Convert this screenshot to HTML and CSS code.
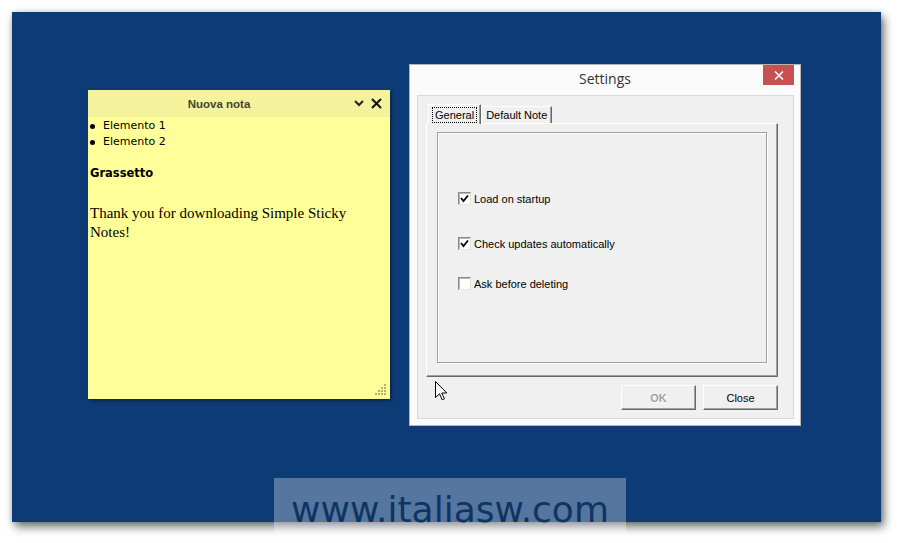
FILE: index.html
```html
<!DOCTYPE html>
<html lang="en">
  <head>
    <meta charset="UTF-8" />
    <meta name="viewport" content="width=device-width, initial-scale=1.0" />
    <title>Simple Sticky Notes</title>
    <link rel="stylesheet" href="styles.css">
  </head>
  <body>
    <div class="desktop">
      <!-- Sticky note window -->
      <div class="note">
        <div class="note-head">
          <span class="note-title">Nuova nota</span>
          <span class="note-tools">
            <svg width="10" height="7" viewBox="0 0 10 7"><polyline points="1,1 5,5 9,1" fill="none" stroke="#222" stroke-width="2"/></svg>
            <svg width="11" height="11" viewBox="0 0 11 11"><path d="M1,1 L10,10 M10,1 L1,10" stroke="#111" stroke-width="2"/></svg>
          </span>
        </div>
        <div class="note-body">
          <ul class="note-list">
            <li>Elemento 1</li>
            <li>Elemento 2</li>
          </ul>
          <p class="note-bold">Grassetto</p>
          <p class="note-text">Thank you for downloading Simple Sticky Notes!</p>
        </div>
        <svg class="grip" width="12" height="12" viewBox="0 0 12 12">
          <g fill="#b8b070">
            <rect x="9" y="0" width="2" height="2"/>
            <rect x="6" y="3" width="2" height="2"/><rect x="9" y="3" width="2" height="2"/>
            <rect x="3" y="6" width="2" height="2"/><rect x="6" y="6" width="2" height="2"/><rect x="9" y="6" width="2" height="2"/>
            <rect x="0" y="9" width="2" height="2"/><rect x="3" y="9" width="2" height="2"/><rect x="6" y="9" width="2" height="2"/><rect x="9" y="9" width="2" height="2"/>
          </g>
        </svg>
      </div>

      <!-- Settings dialog -->
      <div class="dialog">
        <div class="dialog-title">
          <span></span>
          <span class="dialog-caption">Settings</span>
          <button class="dialog-close">
            <svg width="10" height="9" viewBox="0 0 10 9"><path d="M1,0.5 L9,8.5 M9,0.5 L1,8.5" stroke="#fff" stroke-width="1.6"/></svg>
          </button>
        </div>
        <div class="dialog-client">
          <div class="tabs">
            <div class="tab tab-active"><span class="tab-focus">General</span></div>
            <div class="tab">Default Note</div>
          </div>
          <div class="tab-panel">
            <div class="group">
              <label class="check">
                <span class="check-box">
                  <svg width="9" height="9" viewBox="0 0 9 9"><polyline points="1,4 3.5,7 8,1.5" fill="none" stroke="#000" stroke-width="1.8"/></svg>
                </span>
                Load on startup
              </label>
              <label class="check check-far">
                <span class="check-box">
                  <svg width="9" height="9" viewBox="0 0 9 9"><polyline points="1,4 3.5,7 8,1.5" fill="none" stroke="#000" stroke-width="1.8"/></svg>
                </span>
                Check updates automatically
              </label>
              <label class="check check-near">
                <span class="check-box"></span>
                Ask before deleting
              </label>
            </div>
          </div>
          <div class="buttons">
            <button class="btn btn-disabled">OK</button>
            <button class="btn">Close</button>
          </div>
        </div>
      </div>
    </div>

    <div class="watermark">www.italiasw.com</div>

    <svg class="cursor" width="13" height="20" viewBox="0 0 13 20">
      <path d="M0.5,0.5 L0.5,16.5 L4.5,12.8 L7.2,18.8 L9.4,17.8 L6.8,12 L11.8,12 Z" fill="#fff" stroke="#000" stroke-width="1"/>
    </svg>
  </body>
</html>
```

FILE: styles.css
```css
/* Page and desktop background */
body {
  margin: 0;
  width: 901px;
  height: 543px;
  overflow: hidden;
  position: relative;
  background-color: #fff;
  font-family: 'Liberation Sans', Arial, sans-serif;
}

.desktop {
  position: relative;
  margin: 12px;
  width: 869px;
  height: 510px;
  background-color: #0d3b76;
  box-shadow: 3px 5px 9px rgba(0, 0, 0, 0.55), 0 0 5px rgba(0, 0, 0, 0.15);
}

/* Sticky note */
.note {
  position: absolute;
  left: 76px;
  top: 78px;
  width: 302px;
  height: 309px;
  background-color: #ffff99;
  box-shadow: 2px 2px 3px rgba(0, 0, 0, 0.35);
}

.note-head {
  display: flex;
  align-items: center;
  height: 27px;
  background-color: #f4f29d;
}

.note-title {
  flex: 1;
  text-align: center;
  font-weight: bold;
  font-size: 11.5px;
  color: #45452f;
}

.note-tools {
  display: flex;
  align-items: center;
  gap: 7px;
  width: 40px;
  padding-left: 4px;
  box-sizing: border-box;
}

.note-body {
  padding: 1px 10px 0 2px;
  color: #000;
}

.note-list {
  list-style: none;
  margin: 0;
  padding: 0;
  font-family: 'DejaVu Sans', Verdana, sans-serif;
  font-size: 11px;
  line-height: 16px;
}

.note-list li {
  display: flex;
  align-items: center;
}

.note-list li::before {
  content: "";
  width: 5px;
  height: 5px;
  border-radius: 50%;
  background-color: #000;
  margin-right: 8px;
}

.note-bold {
  margin: 15px 0 0;
  font-family: 'DejaVu Sans', Verdana, sans-serif;
  font-weight: bold;
  font-size: 11.5px;
  line-height: 16px;
}

.note-text {
  margin: 23px 0 0;
  font-family: 'Liberation Serif', 'Times New Roman', serif;
  font-size: 15px;
  line-height: 19px;
}

.grip {
  position: absolute;
  right: 3px;
  bottom: 3px;
}

/* Settings dialog */
.dialog {
  position: absolute;
  left: 397px;
  top: 52px;
  width: 377px;
  padding: 0 6px 6px 7px;
  background-color: #fbfbfb;
  border: 1px solid #b4b4b4;
}

.dialog-title {
  display: grid;
  grid-template-columns: 1fr auto 1fr;
  align-items: center;
  height: 30px;
  margin: 0 -6px 0 -7px;
}

.dialog-caption {
  margin-top: -3px;
  font-family: 'Open Sans', 'Noto Sans', sans-serif;
  font-size: 14px;
  color: #333;
}

.dialog-close {
  justify-self: end;
  align-self: start;
  width: 31px;
  height: 20px;
  margin-right: 6px;
  padding: 0;
  border: none;
  background-color: #c75050;
  display: flex;
  align-items: center;
  justify-content: center;
}

.dialog-client {
  background-color: #f0f0f0;
  border: 1px solid #dadada;
  padding: 8px 15px 8px 8px;
}

/* Tabs */
.tabs {
  display: flex;
  align-items: flex-end;
  height: 19px;
  padding-left: 2px;
  font-size: 11px;
  color: #000;
}

.tab {
  height: 17px;
  padding: 0 4px;
  display: flex;
  align-items: center;
  border-left: 1px solid #fff;
  border-top: 1px solid #fff;
  border-right: 1px solid #696969;
  box-shadow: inset -1px 0 #a0a0a0;
  box-sizing: border-box;
  background-color: #f0f0f0;
}

.tab-active {
  height: 20px;
  margin-bottom: -1px;
  padding: 0 3px;
  position: relative;
  z-index: 1;
}

.tab-focus {
  border: 1px dotted #000;
  padding: 0 2px;
  line-height: 14px;
}

.tab-panel {
  padding: 8px 10px 13px 10px;
  border-top: 1px solid #fff;
  border-left: 1px solid #fff;
  border-right: 1px solid #696969;
  border-bottom: 1px solid #696969;
  box-shadow: inset -1px -1px #a0a0a0;
}

.group {
  padding: 59px 0 0 20px;
  box-sizing: border-box;
  height: 231px;
  border: 1px solid #a0a0a0;
  box-shadow: 1px 1px #fff, inset 1px 1px #fff;
}

/* Checkboxes */
.check {
  display: flex;
  align-items: center;
  gap: 3px;
  height: 13px;
  font-size: 11px;
  color: #000;
}

.check-far {
  margin-top: 32px;
}

.check-near {
  margin-top: 27px;
}

.check-box {
  width: 13px;
  height: 13px;
  box-sizing: border-box;
  background-color: #fff;
  border: 1px solid;
  border-color: #8a8a8a #e3e3e3 #e3e3e3 #8a8a8a;
  box-shadow: inset 1px 1px #b8b8b8;
  display: flex;
  align-items: center;
  justify-content: center;
}

/* Dialog buttons */
.buttons {
  display: flex;
  justify-content: flex-end;
  gap: 7px;
  margin-top: 8px;
}

.btn {
  width: 75px;
  height: 25px;
  padding: 0;
  background-color: #f0f0f0;
  border: 1px solid;
  border-color: #fff #696969 #696969 #fff;
  box-shadow: inset -1px -1px #a0a0a0;
  font-family: 'Liberation Sans', Arial, sans-serif;
  font-size: 11px;
  color: #000;
}

.btn-disabled {
  color: #a0a0a0;
  text-shadow: 1px 1px #fff;
  font-weight: bold;
}

/* Overlays */
.watermark {
  position: absolute;
  left: 274px;
  top: 478px;
  width: 352px;
  height: 65px;
  padding-top: 14px;
  box-sizing: border-box;
  background-color: rgba(255, 255, 255, 0.3);
  text-align: center;
  font-family: 'DejaVu Sans', Verdana, sans-serif;
  font-size: 36px;
  line-height: 35px;
  color: #0e3464;
}

.cursor {
  position: absolute;
  left: 435px;
  top: 381px;
}
```
